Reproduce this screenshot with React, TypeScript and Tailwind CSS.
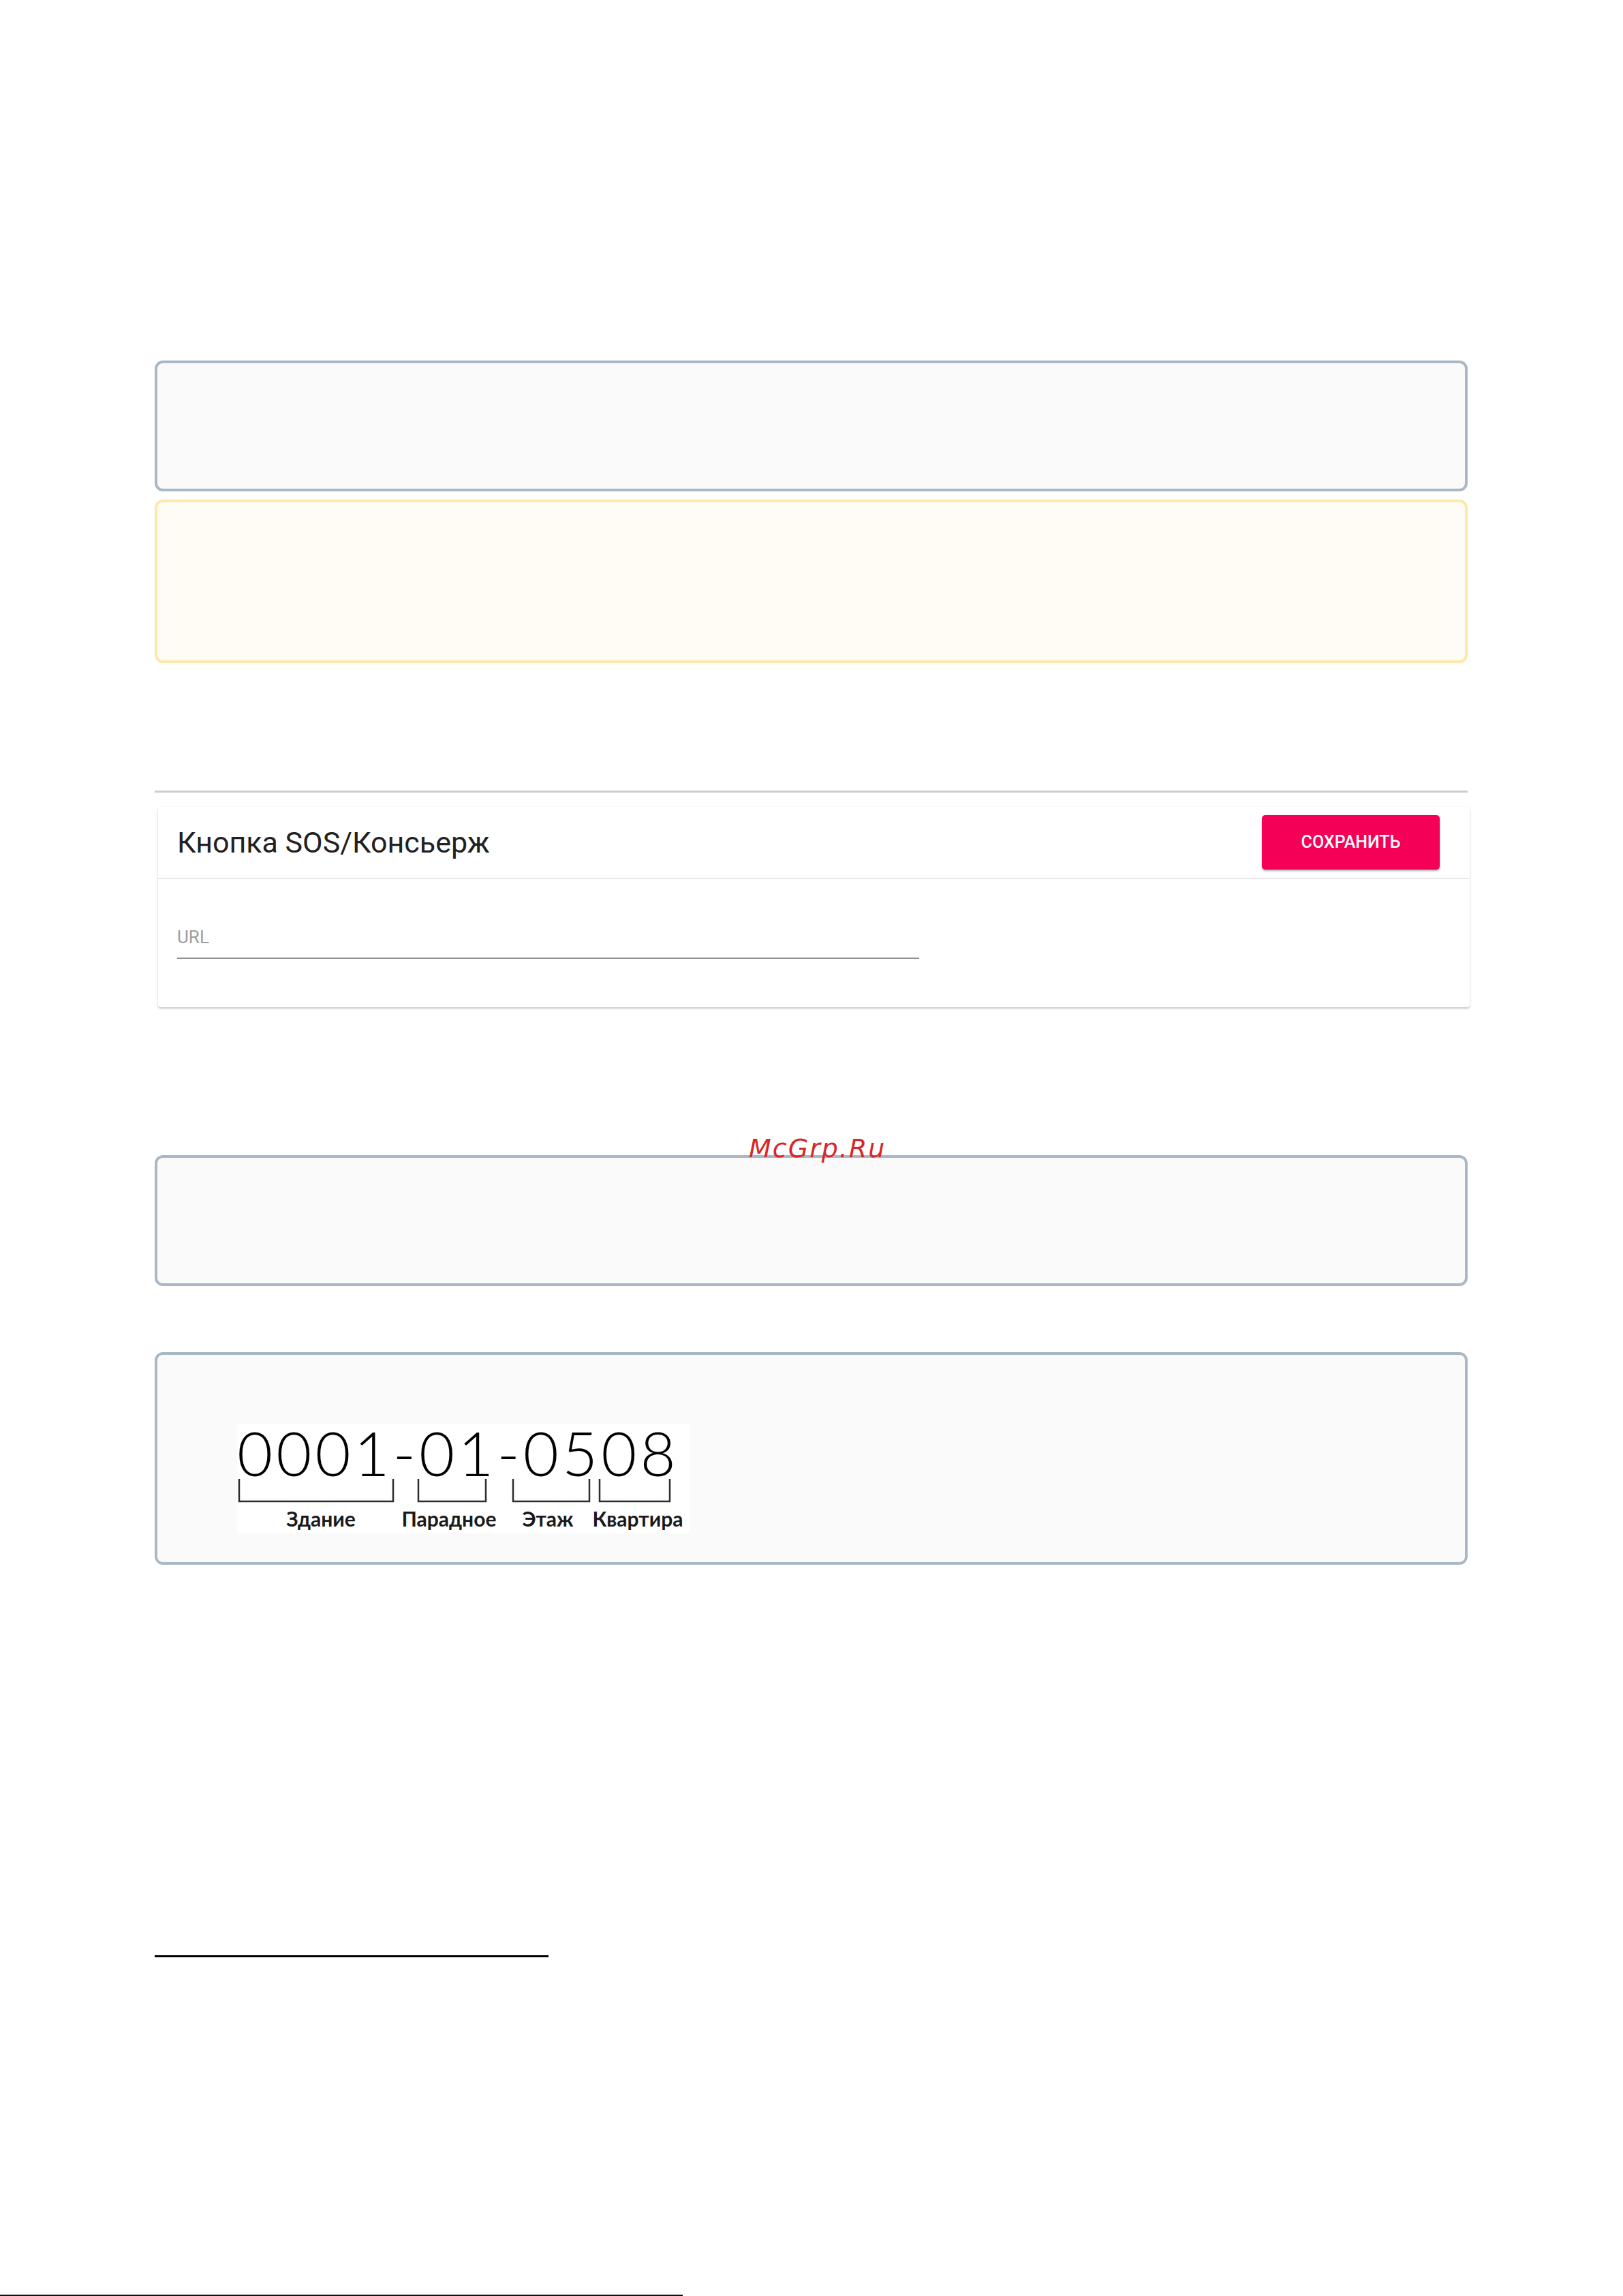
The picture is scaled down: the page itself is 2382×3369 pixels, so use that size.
import React from "react";

function InfoBox({ className }: { className: string }) {
  return <div className={`rounded-[12px] border-4 ${className}`} />;
}

function AddressDiagram() {
  return (
    <div className="flex h-[159px] w-[664px] flex-col bg-white">
      <div className="h-[78px] overflow-visible">
        <div
          className="mt-[-4px] whitespace-nowrap text-[90px] font-light leading-none tracking-[5px] text-black"
          style={{ fontFamily: "Lato, 'Open Sans', sans-serif" }}
        >
          0001-01-0508
        </div>
      </div>
      <svg width="664" height="37" viewBox="0 0 664 37" className="block">
        <g fill="none" stroke="#2e2e2e" strokeWidth="2.5">
          <path d="M3 2 V35 H229 V2" />
          <path d="M266 2 V35 H365 V2" />
          <path d="M405 2 V35 H517 V2" />
          <path d="M532 2 V35 H635 V2" />
        </g>
      </svg>
      <div
        className="mt-[8px] flex text-[30px] font-bold leading-none text-[#1a1a1a]"
        style={{ fontFamily: "Lato, 'Open Sans', sans-serif" }}
      >
        <div className="flex w-[246px] justify-center whitespace-nowrap">Здание</div>
        <div className="flex w-[130px] justify-center whitespace-nowrap">Парадное</div>
        <div className="flex w-[160px] justify-center whitespace-nowrap">Этаж</div>
        <div className="flex w-[104px] justify-center whitespace-nowrap">Квартира</div>
      </div>
    </div>
  );
}

export default function App() {
  return (
    <main
      className="relative flex h-[3369px] w-[2382px] flex-col overflow-hidden bg-white"
      style={{ fontFamily: "Roboto, 'Liberation Sans', sans-serif" }}
    >
      <div className="flex flex-col pl-[227px] pr-[228px] pt-[529px]">
        <InfoBox className="h-[192px] border-[#aab8c5] bg-[#fafafa]" />
        <InfoBox className="mt-[12px] h-[240px] border-[#fee8a9] bg-[#fffcf5]" />

        <div className="mt-[187px] h-[3px] bg-[#cdcdcd]" />

        <section className="ml-[5px] mr-[-3px] mt-[21px] flex h-[294px] flex-col rounded-[4px] bg-white shadow-[0_2px_3px_rgba(0,0,0,0.22),0_0_2px_rgba(0,0,0,0.08)]">
          <div className="flex h-[106px] items-center justify-between border-b-2 border-[#e8e8e8] pl-[28px] pr-[44px]">
            <h2 className="text-[43px] font-normal text-[#212121]">Кнопка SOS/Консьерж</h2>
            <button className="flex h-[80px] w-[261px] items-center justify-center rounded-[5px] bg-[#f50057] text-[25px] font-medium uppercase text-white shadow-[0_3px_3px_-1px_rgba(0,0,0,0.25),0_1px_4px_rgba(0,0,0,0.12)]">
              Сохранить
            </button>
          </div>
          <div className="flex flex-col pl-[28px] pt-[72px]">
            <label className="text-[26px] leading-none text-[#9e9e9e]">URL</label>
            <div className="mt-[17px] h-[2px] w-[1089px] bg-[#949494]" />
          </div>
        </section>

        <InfoBox className="mt-[217px] h-[192px] border-[#aab8c5] bg-[#fafafa]" />

        <div className="mt-[97px] flex h-[312px] rounded-[12px] border-4 border-[#aab8c5] bg-[#fafafa] pl-[117px] pt-[102px]">
          <AddressDiagram />
        </div>

        <div className="mt-[573px] h-[3px] w-[578px] bg-black" />
      </div>

      <div className="mt-auto h-[2px] w-[1002px] bg-[#111]" />

      <div
        className="absolute left-[1099px] top-[1666px] text-[38px] italic leading-none tracking-[2px] text-[#d92626]"
        style={{ fontFamily: "'DejaVu Sans', sans-serif" }}
      >
        McGrp.Ru
      </div>
    </main>
  );
}
